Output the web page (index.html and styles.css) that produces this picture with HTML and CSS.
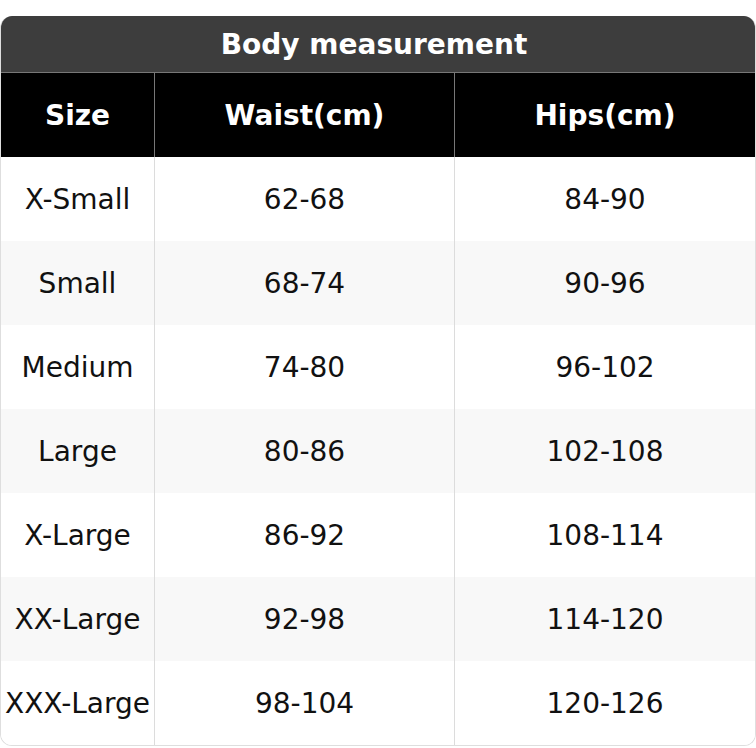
FILE: index.html
```html
<!DOCTYPE html>
<html>
<head>
<meta charset="utf-8">
<link rel="stylesheet" href="styles.css">
</head>
<body>
<div class="chart">
  <div class="title">Body measurement</div>
  <div class="grid">
    <div class="cell head">Size</div>
    <div class="cell head">Waist(cm)</div>
    <div class="cell head last">Hips(cm)</div>

    <div class="cell">X-Small</div><div class="cell">62-68</div><div class="cell last">84-90</div>
    <div class="cell alt">Small</div><div class="cell alt">68-74</div><div class="cell alt last">90-96</div>
    <div class="cell">Medium</div><div class="cell">74-80</div><div class="cell last">96-102</div>
    <div class="cell alt">Large</div><div class="cell alt">80-86</div><div class="cell alt last">102-108</div>
    <div class="cell">X-Large</div><div class="cell">86-92</div><div class="cell last">108-114</div>
    <div class="cell alt">XX-Large</div><div class="cell alt">92-98</div><div class="cell alt last">114-120</div>
    <div class="cell">XXX-Large</div><div class="cell">98-104</div><div class="cell last">120-126</div>
  </div>
</div>
</body>
</html>
```
FILE: styles.css
```css
html, body {
  margin: 0;
  padding: 0;
  background: #ffffff;
}
body {
  padding-top: 16px;
  font-family: "DejaVu Sans", sans-serif;
}
.chart {
  width: 756px;
  box-sizing: border-box;
  border: 1px solid #dedede;
  border-top: none;
  border-radius: 12px;
  overflow: hidden;
}
.title {
  height: 56px;
  background: #3d3d3d;
  color: #ffffff;
  font-weight: bold;
  font-size: 28px;
  display: flex;
  align-items: center;
  justify-content: center;
  padding-right: 8px;
  border-bottom: 1px solid #777777;
}
.grid {
  display: grid;
  grid-template-columns: 154px 300px 1fr;
}
.cell {
  height: 84px;
  display: flex;
  align-items: center;
  justify-content: center;
  font-size: 28px;
  color: #111111;
  background: #ffffff;
  border-right: 1px solid #dcdcdc;
  white-space: nowrap;
}
.cell.last {
  border-right: none;
}
.cell.alt {
  background: #f8f8f8;
}
.cell.head {
  background: #000000;
  color: #ffffff;
  font-weight: bold;
  border-right-color: #777777;
}
```
